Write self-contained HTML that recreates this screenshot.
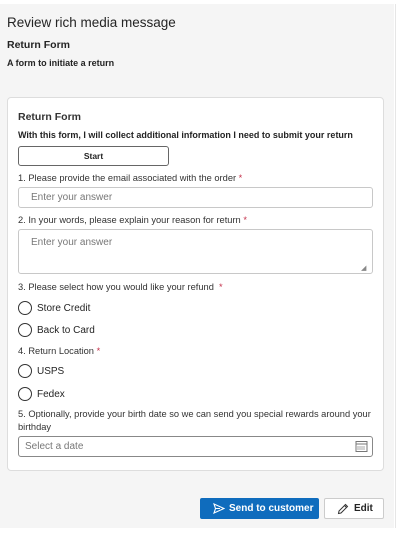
<!DOCTYPE html>
<html><head><style>
*{box-sizing:border-box;margin:0;padding:0}
body{width:404px;height:540px;background:#fff;font-family:"Liberation Sans",sans-serif;color:#242424;position:relative;overflow:hidden}
.bg{position:absolute;left:0;top:4px;width:394px;height:524px;background:#f5f5f5}
.rl{position:absolute;left:395px;top:4px;width:1px;height:524px;background:#e6e6e6}
.a{position:absolute;white-space:nowrap}
.card{position:absolute;left:7px;top:97px;width:377px;height:374px;background:#fff;border:1px solid #ddd;border-radius:4px}
.inp{position:absolute;left:18px;width:355px;border:1px solid #c8c8c8;border-radius:3px;background:#fff;font-size:10px;color:#777;padding-left:12px}
.r{position:absolute;left:18px;width:14px;height:14px;border:1px solid #333;border-radius:50%}
.rt{position:absolute;left:37px;font-size:10px}
.q{position:absolute;left:18px;font-size:9.3px;color:#333}
.star{color:#c4314b}
</style></head><body>
<div class="bg"></div><div class="rl"></div>
<div class="a" style="left:7px;top:15px;font-size:13.5px">Review rich media message</div>
<div class="a" style="left:7px;top:39px;font-size:10.5px;font-weight:bold">Return Form</div>
<div class="a" style="left:7px;top:58px;font-size:9px;font-weight:bold">A form to initiate a return</div>
<div class="card"></div>
<div class="a" style="left:18px;top:111px;font-size:10.5px;font-weight:bold;color:#333">Return Form</div>
<div class="a" style="left:18px;top:130px;font-size:9px;font-weight:bold">With this form, I will collect additional information I need to submit your return</div>
<div class="a" style="left:18px;top:146px;width:151px;height:20px;border:1px solid #666;border-radius:3px;font-size:8.5px;font-weight:bold;text-align:center;line-height:18px">Start</div>
<div class="q" style="top:173px">1. Please provide the email associated with the order <span class="star">*</span></div>
<div class="inp" style="top:187px;height:21px;line-height:19px">Enter your answer</div>
<div class="q" style="top:215px">2. In your words, please explain your reason for return <span class="star">*</span></div>
<div class="inp" style="top:229px;height:45px;padding-top:7px">Enter your answer</div>
<div class="a" style="left:361px;top:264px;font-size:7px;color:#888">◢</div>
<div class="q" style="top:282px">3. Please select how you would like your refund &nbsp;<span class="star">*</span></div>
<div class="r" style="top:301px"></div><div class="rt" style="top:303px">Store Credit</div>
<div class="r" style="top:323px"></div><div class="rt" style="top:325px">Back to Card</div>
<div class="q" style="top:346px">4. Return Location <span class="star">*</span></div>
<div class="r" style="top:364px"></div><div class="rt" style="top:366px">USPS</div>
<div class="r" style="top:387px"></div><div class="rt" style="top:389px">Fedex</div>
<div class="q" style="top:409px">5. Optionally, provide your birth date so we can send you special rewards around your</div>
<div class="q" style="top:422px">birthday</div>
<div class="inp" style="top:436px;height:21px;line-height:19px;padding-left:6px;border-color:#888">Select a date</div>
<svg class="a" style="left:355px;top:440px" width="13" height="13" viewBox="0 0 13 13"><rect x="1" y="1.5" width="11" height="10" fill="none" stroke="#777"/><line x1="1" y1="4" x2="12" y2="4" stroke="#777"/><path d="M3 6v4M5 6v4M7 6v4M9 6v4" stroke="#aaa"/></svg>
<div class="a" style="left:200px;top:498px;width:119px;height:21px;background:#0f6cbd;color:#fff;font-size:10px;font-weight:bold;border-radius:2px;line-height:21px;padding-left:29px">Send to customer</div>
<svg class="a" style="left:213px;top:503px" width="12" height="11" viewBox="0 0 12 11"><path d="M1 1L11 5.5L1 10L2.5 5.5Z M2.5 5.5H7" fill="none" stroke="#fff" stroke-width="1.1"/></svg>
<div class="a" style="left:324px;top:498px;width:60px;height:21px;background:#fff;border:1px solid #ccc;border-radius:2px;font-size:10px;font-weight:bold;line-height:19px;padding-left:29px">Edit</div>
<svg class="a" style="left:337px;top:503px" width="12" height="12" viewBox="0 0 12 12"><path d="M1.5 10.5L2 8L8.5 1.5L10.5 3.5L4 10Z M7.5 2.5L9.5 4.5" fill="none" stroke="#333" stroke-width="1"/></svg>
</body></html>
